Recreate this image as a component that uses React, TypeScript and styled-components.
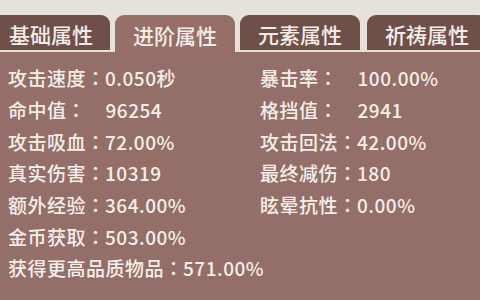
import React from "react";
import styled, { createGlobalStyle } from "styled-components";

const GlobalStyle = createGlobalStyle`
  html, body {
    margin: 0;
    padding: 0;
    background: #e6e1d9;
  }
  body {
    font-family: "Noto Sans CJK SC", "Noto Sans", sans-serif;
  }
`;

type Stat = {
  label: string;
  value: string;
  pad?: boolean;
  wide?: boolean;
};

const tabs = [
  { name: "基础属性", width: 118, active: false },
  { name: "进阶属性", width: 120, active: true },
  { name: "元素属性", width: 120, active: false },
  { name: "祈祷属性", width: 120, active: false },
];

const stats: Stat[] = [
  { label: "攻击速度", value: "0.050秒" },
  { label: "暴击率", value: "100.00%", pad: true },
  { label: "命中值", value: "96254", pad: true },
  { label: "格挡值", value: "2941", pad: true },
  { label: "攻击吸血", value: "72.00%" },
  { label: "攻击回法", value: "42.00%" },
  { label: "真实伤害", value: "10319" },
  { label: "最终减伤", value: "180" },
  { label: "额外经验", value: "364.00%" },
  { label: "眩晕抗性", value: "0.00%" },
  { label: "金币获取", value: "503.00%", wide: true },
  { label: "获得更高品质物品", value: "571.00%", wide: true },
];

const App = () => {
  return (
    <Screen>
      <GlobalStyle />
      <TabBar>
        {tabs.map((t) => (
          <Tab key={t.name} $active={t.active} $width={t.width}>
            {t.name}
          </Tab>
        ))}
      </TabBar>
      <Panel>
        {stats.map((s) => (
          <StatRow key={s.label} $wide={s.wide}>
            <Label>{s.label}</Label>
            <Colon>：</Colon>
            <Value $pad={s.pad}>{s.value}</Value>
          </StatRow>
        ))}
      </Panel>
    </Screen>
  );
};

const Screen = styled.div`
  width: 480px;
  height: 300px;
  overflow: hidden;
  background: #e6e1d9;
  display: flex;
  flex-direction: column;
`;

const TabBar = styled.div`
  display: flex;
  align-items: flex-end;
  gap: 5px;
  padding-top: 15px;
  margin-left: -8px;
  height: 37px;
  flex-shrink: 0;
`;

const Tab = styled.div<{ $active: boolean; $width: number }>`
  flex-shrink: 0;
  width: ${(p) => p.$width}px;
  height: ${(p) => (p.$active ? 37 : 35)}px;
  margin-bottom: ${(p) => (p.$active ? 0 : 2)}px;
  border-radius: 9px 9px 0 0;
  background: ${(p) => (p.$active ? "#966f69" : "#6f4f4a")};
  color: #f4ece8;
  font-size: 21px;
  font-weight: 500;
  display: flex;
  align-items: center;
  justify-content: center;
  padding-top: 2px;
  box-sizing: border-box;

  &:last-child {
    margin-left: 2px;
  }
`;

const Panel = styled.div`
  flex: 1;
  background: #946f69;
  padding: 10px 0 0 8px;
  display: grid;
  grid-template-columns: 252px 1fr;
  grid-auto-rows: 31.7px;
  align-content: start;
`;

const StatRow = styled.div<{ $wide?: boolean }>`
  grid-column: ${(p) => (p.$wide ? "1 / span 2" : "auto")};
  display: flex;
  align-items: center;
  white-space: nowrap;
  color: #f5eeea;
  font-size: 19px;
  letter-spacing: 0.5px;
  font-weight: 500;
`;

const Label = styled.span``;

const Colon = styled.span`
  font-family: "Noto Sans CJK JP", "Noto Sans CJK SC", sans-serif;
  display: inline-block;
  width: 19px;
  letter-spacing: 0;
  text-align: center;
  overflow: hidden;
`;

const Value = styled.span<{ $pad?: boolean }>`
  margin-left: ${(p) => (p.$pad ? 20 : 0)}px;
`;

export default App;
